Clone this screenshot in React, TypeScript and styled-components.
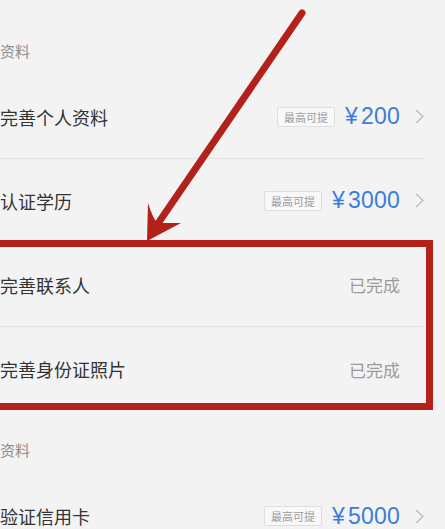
import React from 'react';
import styled, { createGlobalStyle } from 'styled-components';

interface Task {
  label: string;
  amount?: number;
  done?: boolean;
}

interface Group {
  title: string;
  tasks: Task[];
}

const GlobalStyle = createGlobalStyle`
  html, body {
    margin: 0;
    padding: 0;
    background: #f3f3f3;
    overflow: hidden;
  }
  body {
    font-family: "Noto Sans CJK SC", "Noto Sans", sans-serif;
  }
`;

const Screen = styled.div`
  position: relative;
  width: 445px;
  height: 529px;
  padding: 12px 21px 0 0;
  box-sizing: border-box;
  overflow: hidden;
`;

const GroupTitle = styled.div`
  height: 63px;
  display: flex;
  align-items: flex-end;
  padding-bottom: 14px;
  box-sizing: border-box;
  font-size: 15px;
  line-height: 20px;
  color: #8c8c8c;
`;

const Row = styled.div<{ $last: boolean }>`
  height: 84px;
  display: flex;
  align-items: center;
  box-sizing: border-box;
  border-bottom: ${p => (p.$last ? 'none' : '1px solid #e4e4e4')};
`;

const Label = styled.div`
  flex: 1;
  font-size: 18px;
  color: #333;
`;

const Tag = styled.span`
  font-size: 11px;
  line-height: 18px;
  padding: 0 6px;
  color: #9a9a9a;
  background: #f8f8f8;
  border: 1px solid #dedede;
  border-radius: 2px;
  margin-right: 10px;
`;

const Amount = styled.span`
  font-family: "Liberation Sans", Arial, sans-serif;
  font-size: 23px;
  color: #3b7cdc;
  letter-spacing: 0.2px;
`;

const Yuan = styled.span`
  margin-right: 3px;
`;

const Done = styled.span`
  font-size: 17px;
  color: #9b9b9b;
`;

const Chevron = styled.svg<{ $hidden: boolean }>`
  width: 9px;
  height: 15px;
  margin-left: 15px;
  visibility: ${p => (p.$hidden ? 'hidden' : 'visible')};
`;

const Overlay = styled.svg`
  position: absolute;
  left: 0;
  top: 0;
  width: 445px;
  height: 529px;
  pointer-events: none;
`;

const groups: Group[] = [
  {
    title: '资料',
    tasks: [
      { label: '完善个人资料', amount: 200 },
      { label: '认证学历', amount: 3000 },
      { label: '完善联系人', done: true },
      { label: '完善身份证照片', done: true },
    ],
  },
  {
    title: '资料',
    tasks: [{ label: '验证信用卡', amount: 5000 }],
  },
];

const ANNOTATION = '#b3211b';

const App: React.FC = () => {
  return (
    <Screen>
      <GlobalStyle />
      {groups.map((group, gi) => (
        <div key={gi}>
          <GroupTitle>{group.title}</GroupTitle>
          {group.tasks.map((task, ti) => (
            <Row key={ti} $last={ti === group.tasks.length - 1}>
              <Label>{task.label}</Label>
              {task.done ? (
                <Done>已完成</Done>
              ) : (
                <>
                  <Tag>最高可提</Tag>
                  <Amount>
                    <Yuan>¥</Yuan>
                    {task.amount}
                  </Amount>
                </>
              )}
              <Chevron $hidden={!!task.done} viewBox="0 0 9 15">
                <polyline points="1,1 8,7.5 1,14" fill="none" stroke="#bdbdbd" strokeWidth="1.4" />
              </Chevron>
            </Row>
          ))}
        </div>
      ))}

      {/* red highlight box and pointer arrow */}
      <Overlay viewBox="0 0 445 529">
        <rect x="-10" y="243.5" width="439.5" height="163" fill="none" stroke={ANNOTATION} strokeWidth="7" />
        <line x1="302" y1="13" x2="159" y2="222" stroke={ANNOTATION} strokeWidth="7" strokeLinecap="round" />
        <path d="M147,241 L148,203 Q152,216 157,223 Q168,223 181,223 Z" fill={ANNOTATION} />
      </Overlay>
    </Screen>
  );
};

export default App;
